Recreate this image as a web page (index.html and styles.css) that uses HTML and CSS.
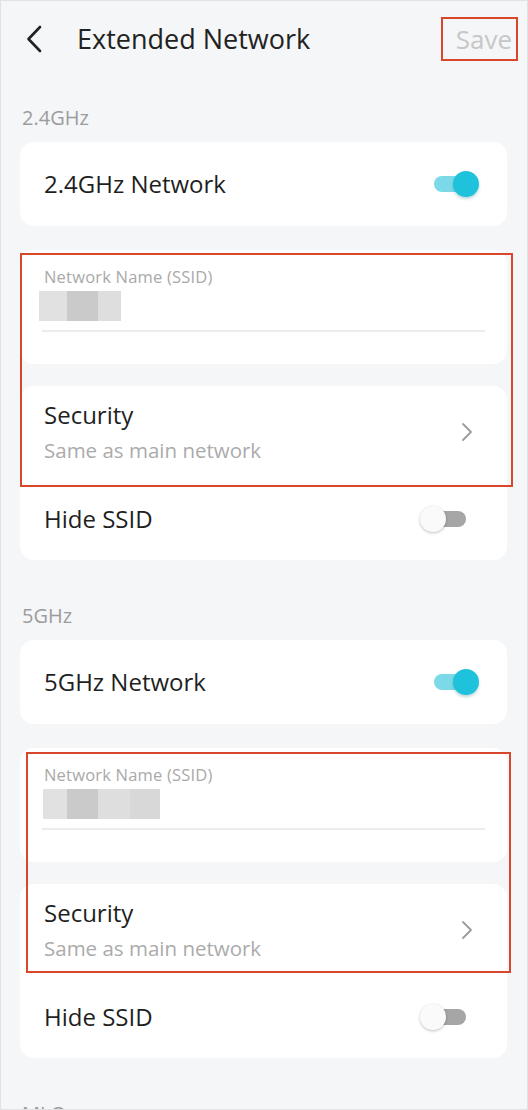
FILE: index.html
```html
<!DOCTYPE html>
<html lang="en">
<head>
<meta charset="utf-8">
<title>Extended Network</title>
<link rel="stylesheet" href="styles.css">
</head>
<body>
<div class="screen">
  <header class="topbar">
    <svg class="back" width="20" height="28" viewBox="0 0 20 28" aria-hidden="true">
      <path d="M16 2 L4.5 14 L16 26" fill="none" stroke="#222" stroke-width="2.6" stroke-linecap="round" stroke-linejoin="round"/>
    </svg>
    <h1 class="title">Extended Network</h1>
    <span class="save">Save</span>
  </header>

  <main class="content">
    <section class="band">
      <div class="band-label">2.4GHz</div>
      <div class="card toggle-card">
        <span class="row-title">2.4GHz Network</span>
        <span class="toggle on"><span class="track"></span><span class="knob"></span></span>
      </div>
      <div class="card ssid-card">
        <div class="field-label">Network Name (SSID)</div>
        <div class="masked">
          <span class="px l1"></span><span class="px d"></span><span class="px l2 short"></span>
        </div>
        <div class="underline"></div>
      </div>
      <div class="card settings-card">
        <div class="security-row">
          <div class="security-text">
            <div class="row-title">Security</div>
            <div class="row-sub">Same as main network</div>
          </div>
          <svg class="chev" width="12" height="20" viewBox="0 0 12 20" aria-hidden="true">
            <path d="M2 2 L10 10 L2 18" fill="none" stroke="#9b9b9b" stroke-width="1.8" stroke-linecap="round" stroke-linejoin="round"/>
          </svg>
        </div>
        <div class="hide-row">
          <span class="row-title">Hide SSID</span>
          <span class="toggle off"><span class="track"></span><span class="knob"></span></span>
        </div>
      </div>
    </section>

    <section class="band">
      <div class="band-label">5GHz</div>
      <div class="card toggle-card">
        <span class="row-title">5GHz Network</span>
        <span class="toggle on"><span class="track"></span><span class="knob"></span></span>
      </div>
      <div class="card ssid-card">
        <div class="field-label">Network Name (SSID)</div>
        <div class="masked second">
          <span class="px l1"></span><span class="px d"></span><span class="px l2"></span><span class="px m"></span>
        </div>
        <div class="underline"></div>
      </div>
      <div class="card settings-card">
        <div class="security-row">
          <div class="security-text">
            <div class="row-title">Security</div>
            <div class="row-sub">Same as main network</div>
          </div>
          <svg class="chev" width="12" height="20" viewBox="0 0 12 20" aria-hidden="true">
            <path d="M2 2 L10 10 L2 18" fill="none" stroke="#9b9b9b" stroke-width="1.8" stroke-linecap="round" stroke-linejoin="round"/>
          </svg>
        </div>
        <div class="hide-row">
          <span class="row-title">Hide SSID</span>
          <span class="toggle off"><span class="track"></span><span class="knob"></span></span>
        </div>
      </div>
    </section>

    <section class="band">
      <div class="band-label">MLO</div>
    </section>
  </main>

  <div class="mark mark-1"></div>
  <div class="mark mark-2"></div>
</div>
</body>
</html>
```
FILE: styles.css
```css
* { box-sizing: border-box; }

html, body {
  margin: 0;
  padding: 0;
  background: #f5f6f8;
}

.screen {
  position: relative;
  width: 528px;
  height: 1110px;
  overflow: hidden;
  background: #f5f6f8;
  border: 1px solid #e1e2e4;
  font-family: "Open Sans", "Liberation Sans", sans-serif;
  color: #1f1f1f;
}

/* Header */
.topbar {
  display: flex;
  align-items: center;
  height: 76px;
  padding: 0 9px 0 23px;
}
.back { flex: none; display: block; }
.title {
  margin: 0 0 0 33px;
  font-size: 27px;
  font-weight: 400;
  color: #222;
  line-height: 1.36;
}
.save {
  margin-left: auto;
  font-size: 26px;
  line-height: 36px;
  color: #c7c7c7;
  border: 2px solid #d8472b;
  padding: 2px 4px 2px 13px;
}

/* Content */
.content {
  padding: 0 20px 0 19px;
}
.band-label {
  font-size: 20px;
  line-height: 27px;
  color: #9c9c9c;
  margin: 27px 0 0 2px;
}
.band + .band .band-label { margin-top: 42px; }

.card {
  background: #fff;
  border-radius: 14px;
}

.row-title {
  font-size: 24px;
  line-height: 32px;
  color: #1f1f1f;
}
.row-sub {
  font-size: 20.5px;
  line-height: 28px;
  color: #ababab;
  margin-top: 5px;
}

.toggle-card {
  margin-top: 11px;
  height: 84px;
  display: flex;
  align-items: center;
  justify-content: space-between;
  padding: 0 27px 0 24px;
}

/* Toggle */
.toggle {
  position: relative;
  width: 54px;
  height: 28px;
  flex: none;
}
.toggle .track {
  position: absolute;
  top: 6px;
  height: 16px;
  border-radius: 8px;
}
.toggle .knob {
  position: absolute;
  top: 1px;
  width: 26px;
  height: 26px;
  border-radius: 50%;
}
.toggle.on .track { left: 8px; width: 36px; background: #7bd9e8; }
.toggle.on .knob {
  left: 27px;
  background: #1ec3db;
  box-shadow: 0 2px 3px rgba(0, 90, 110, 0.25);
}
.toggle.off .track { left: 14px; width: 32px; background: #a6a6a6; }
.toggle.off .knob {
  left: 0;
  background: #fafafa;
  box-shadow: 0 1px 3px rgba(0, 0, 0, 0.25);
}

/* SSID */
.ssid-card {
  margin-top: 24px;
  height: 114px;
  padding: 16px 22px 0 24px;
}
.field-label {
  font-size: 16.5px;
  line-height: 22px;
  color: #a9a9a9;
  letter-spacing: 0.2px;
}
.masked {
  display: flex;
  height: 30px;
  margin: 3px 0 0 -5px;
}
.masked.second { margin-left: -1px; }
.px { display: block; height: 30px; }
.px.l1 { width: 28px; background: #e1e1e1; }
.masked.second .px.l1 { width: 24px; }
.px.d { width: 31px; background: #cacaca; }
.px.l2 { width: 32px; background: #dedede; }
.px.l2.short { width: 23px; }
.px.m { width: 30px; background: #d8d8d8; }
.underline {
  margin: 9px 0 0 -2px;
  height: 2px;
  background: #ececec;
}

/* Security + Hide */
.settings-card {
  margin-top: 22px;
}
.security-row {
  display: flex;
  align-items: center;
  justify-content: space-between;
  padding: 13px 34px 14px 24px;
}
.chev { display: block; flex: none; }
.hide-row {
  height: 82px;
  display: flex;
  align-items: center;
  justify-content: space-between;
  padding: 0 33px 0 24px;
}

/* Annotation boxes */
.mark {
  position: absolute;
  border: 2px solid #d8472b;
  pointer-events: none;
}
.mark-1 { left: 19px; top: 252px; width: 493px; height: 234px; }
.mark-2 { left: 25px; top: 751px; width: 485px; height: 221px; }
```
